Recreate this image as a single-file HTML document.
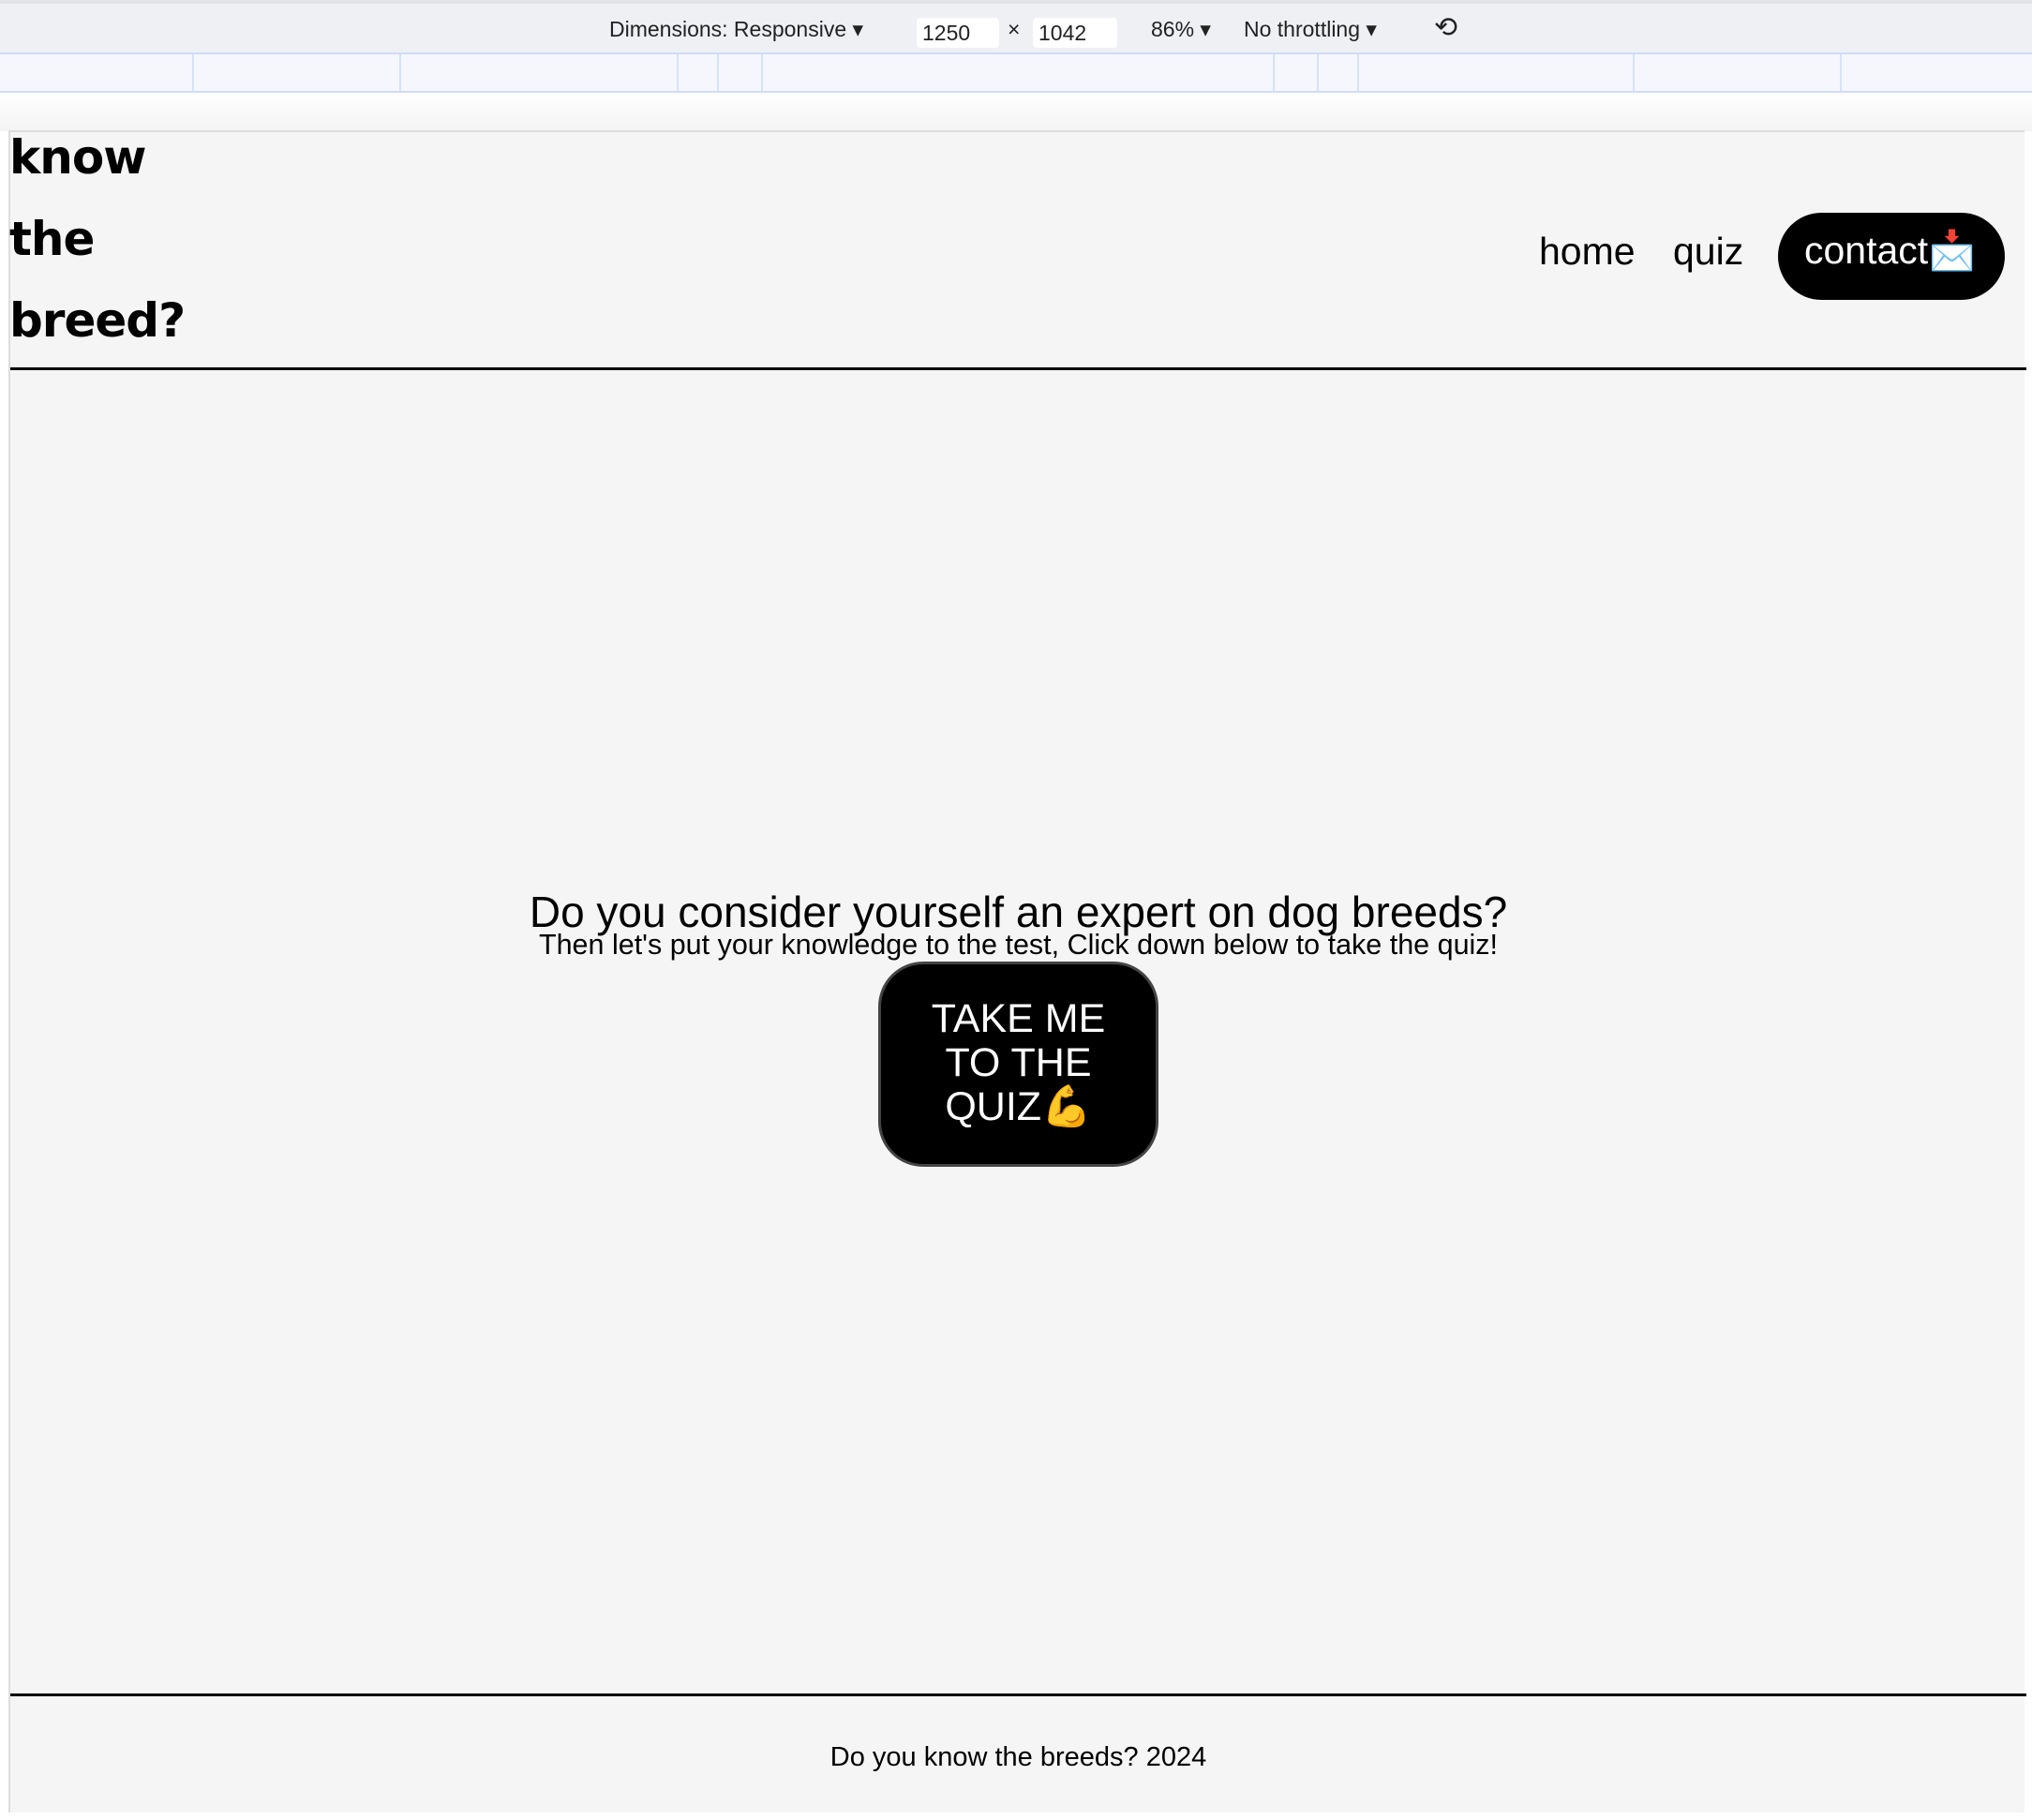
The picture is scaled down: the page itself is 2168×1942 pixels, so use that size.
<!DOCTYPE html>
<html><head><meta charset="utf-8"><style>
*{margin:0;padding:0;box-sizing:border-box}
body{width:2168px;height:1942px;background:#fff;position:relative;overflow:hidden;font-family:"Liberation Sans",sans-serif}
.tb{position:absolute;left:0;top:0;width:2168px;height:58px;background:#eef0f4;border-top:4px solid #e2e3e6;border-bottom:2px solid #cfdcf6}
.tb span{position:absolute;top:14px;font-size:23px;color:#222}
.inp{position:absolute;top:15px;height:32px;background:#fff;border-radius:4px;font-size:23px;padding:3px 6px;color:#222}
.rul{position:absolute;left:0;top:58px;width:2168px;height:41px;background:#f5f7fc;border-bottom:2px solid #cfdcf6}
.rul i{position:absolute;top:0;width:2px;height:39px;background:#d6e2f8}
.shade{position:absolute;left:0;top:99px;width:2168px;height:41px;background:linear-gradient(#fff,#f4f4f4)}
.page{position:absolute;left:9px;top:139px;width:2151px;height:1795px;background:#f5f5f5;border-top:2px solid #ddd;border-left:2px solid #ddd}
.logo{position:absolute;left:-1px;font-family:"DejaVu Sans",sans-serif;font-weight:900;font-size:50px;letter-spacing:-1px;color:#000}
.nav{position:absolute;font-size:41px;color:#000;top:104px}
.btn{position:absolute;left:1886px;top:86px;width:242px;height:93px;background:#000;border-radius:47px;color:#fff;font-size:41px;padding:17px 0 0 28px}
.line{position:absolute;left:0;width:2151px;height:3px;background:#000}
</style></head><body>
<div class="tb">
<span style="left:650px">Dimensions: Responsive ▾</span>
<div class="inp" style="left:978px;width:88px">1250</div>
<span style="left:1075px">×</span>
<div class="inp" style="left:1102px;width:90px">1042</div>
<span style="left:1228px">86% ▾</span>
<span style="left:1327px">No throttling ▾</span>
<span style="left:1530px;font-size:30px;top:8px">⟲</span>
</div>
<div class="rul"><i style="left:205px"></i><i style="left:426px"></i><i style="left:722px"></i><i style="left:765px"></i><i style="left:812px"></i><i style="left:1358px"></i><i style="left:1405px"></i><i style="left:1448px"></i><i style="left:1742px"></i><i style="left:1963px"></i></div>
<div class="shade"></div>
<div class="page">
<div class="logo" style="top:-2px">know</div>
<div class="logo" style="top:85px">the</div>
<div class="logo" style="top:172px">breed?</div>
<div class="nav" style="left:1631px">home</div>
<div class="nav" style="left:1774px">quiz</div>
<div class="btn">contact📩</div>
<div class="line" style="top:251px"></div>
<div style="position:absolute;left:0;width:2151px;top:805px;text-align:center;font-size:46px;color:#000">Do you consider yourself an expert on dog breeds?</div>
<div style="position:absolute;left:0;width:2151px;top:850px;text-align:center;font-size:30.5px;color:#000">Then let's put your knowledge to the test, Click down below to take the quiz!</div>
<div style="position:absolute;left:926px;top:885px;width:299px;height:219px;background:#000;border:3px solid #444;border-radius:48px;color:#fff;font-size:43px;text-align:center;line-height:47px;padding-top:35px">TAKE ME<br>TO THE<br>QUIZ💪</div>
<div class="line" style="top:1666px"></div>
<div style="position:absolute;left:0;width:2151px;top:1718px;text-align:center;font-size:29px;color:#000">Do you know the breeds? 2024</div>
</div>
</body></html>
